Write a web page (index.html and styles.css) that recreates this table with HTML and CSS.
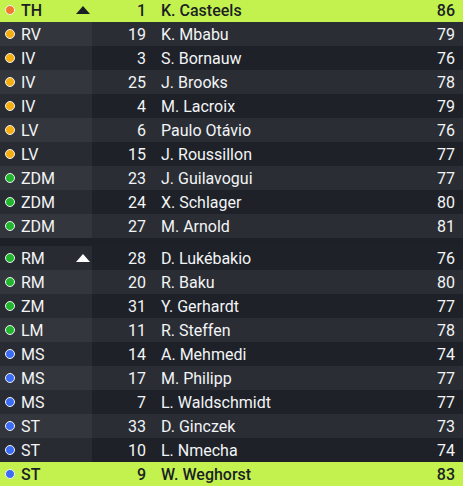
FILE: index.html
```html
<!DOCTYPE html>
<html>
<head>
<meta charset="utf-8">
<link rel="stylesheet" href="styles.css">
</head>
<body>
<div class="list">
  <div class="group">
    <div class="row hl"><div class="pos"><span class="dot th"></span><span class="pt">TH</span><span class="tri dark"></span></div><div class="num">1</div><div class="name">K. Casteels</div><div class="rat">86</div></div>
    <div class="row odd"><div class="pos"><span class="dot df"></span><span class="pt">RV</span></div><div class="num">19</div><div class="name">K. Mbabu</div><div class="rat">79</div></div>
    <div class="row even"><div class="pos"><span class="dot df"></span><span class="pt">IV</span></div><div class="num">3</div><div class="name">S. Bornauw</div><div class="rat">76</div></div>
    <div class="row odd"><div class="pos"><span class="dot df"></span><span class="pt">IV</span></div><div class="num">25</div><div class="name">J. Brooks</div><div class="rat">78</div></div>
    <div class="row even"><div class="pos"><span class="dot df"></span><span class="pt">IV</span></div><div class="num">4</div><div class="name">M. Lacroix</div><div class="rat">79</div></div>
    <div class="row odd"><div class="pos"><span class="dot df"></span><span class="pt">LV</span></div><div class="num">6</div><div class="name">Paulo Otávio</div><div class="rat">76</div></div>
    <div class="row even"><div class="pos"><span class="dot df"></span><span class="pt">LV</span></div><div class="num">15</div><div class="name">J. Roussillon</div><div class="rat">77</div></div>
    <div class="row odd"><div class="pos"><span class="dot mf"></span><span class="pt">ZDM</span></div><div class="num">23</div><div class="name">J. Guilavogui</div><div class="rat">77</div></div>
    <div class="row even"><div class="pos"><span class="dot mf"></span><span class="pt">ZDM</span></div><div class="num">24</div><div class="name">X. Schlager</div><div class="rat">80</div></div>
    <div class="row odd"><div class="pos"><span class="dot mf"></span><span class="pt">ZDM</span></div><div class="num">27</div><div class="name">M. Arnold</div><div class="rat">81</div></div>
  </div>
  <div class="group second">
    <div class="row even"><div class="pos"><span class="dot mf"></span><span class="pt">RM</span><span class="tri light"></span></div><div class="num">28</div><div class="name">D. Lukébakio</div><div class="rat">76</div></div>
    <div class="row odd"><div class="pos"><span class="dot mf"></span><span class="pt">RM</span></div><div class="num">20</div><div class="name">R. Baku</div><div class="rat">80</div></div>
    <div class="row even"><div class="pos"><span class="dot mf"></span><span class="pt">ZM</span></div><div class="num">31</div><div class="name">Y. Gerhardt</div><div class="rat">77</div></div>
    <div class="row odd"><div class="pos"><span class="dot mf"></span><span class="pt">LM</span></div><div class="num">11</div><div class="name">R. Steffen</div><div class="rat">78</div></div>
    <div class="row even"><div class="pos"><span class="dot fw"></span><span class="pt">MS</span></div><div class="num">14</div><div class="name">A. Mehmedi</div><div class="rat">74</div></div>
    <div class="row odd"><div class="pos"><span class="dot fw"></span><span class="pt">MS</span></div><div class="num">17</div><div class="name">M. Philipp</div><div class="rat">77</div></div>
    <div class="row even"><div class="pos"><span class="dot fw"></span><span class="pt">MS</span></div><div class="num">7</div><div class="name">L. Waldschmidt</div><div class="rat">77</div></div>
    <div class="row odd"><div class="pos"><span class="dot fw"></span><span class="pt">ST</span></div><div class="num">33</div><div class="name">D. Ginczek</div><div class="rat">73</div></div>
    <div class="row even"><div class="pos"><span class="dot fw"></span><span class="pt">ST</span></div><div class="num">10</div><div class="name">L. Nmecha</div><div class="rat">74</div></div>
    <div class="row hl"><div class="pos"><span class="dot fw"></span><span class="pt">ST</span></div><div class="num">9</div><div class="name">W. Weghorst</div><div class="rat">83</div></div>
  </div>
</div>
</body>
</html>
```
FILE: styles.css
```css
html, body {
  margin: 0;
  padding: 0;
  background: #1d2026;
  overflow: hidden;
}
body {
  width: 463px;
  height: 486px;
  font-family: Roboto, "Liberation Sans", sans-serif;
  font-size: 16px;
  color: #f2f4f6;
}
.list {
  margin-top: -2px;
  display: flex;
  flex-direction: column;
}
.group {
  display: flex;
  flex-direction: column;
}
.group.second {
  margin-top: 8px;
}
.row {
  height: 24px;
  display: grid;
  grid-template-columns: 92px 54px 1fr auto;
  align-items: center;
}
.row > div {
  height: 100%;
  display: flex;
  align-items: center;
}
.odd { background: #2a2d34; }
.odd .pos { background: #33363d; }
.even { background: #1e2128; }
.even .pos { background: #282b32; }
.hl {
  background: #c3f24f;
  color: #1b1f24;
  font-weight: 500;
}
.pos {
  padding-left: 5px;
  box-sizing: border-box;
}
.dot {
  width: 8px;
  height: 8px;
  border-radius: 50%;
  border: 1px solid #f2f2f2;
  margin-right: 6px;
  flex: none;
}
.dot.th { background: #f27a2a; }
.dot.df { background: #f5ae0f; }
.dot.mf { background: #22b52e; }
.dot.fw { background: #3c6cf4; }
.pt { flex: 1; }
.tri {
  width: 0;
  height: 0;
  border-left: 7px solid transparent;
  border-right: 7px solid transparent;
  margin-right: 2px;
  margin-bottom: 1px;
}
.tri.dark { border-bottom: 8px solid #1b1f24; }
.tri.light { border-bottom: 8px solid #ffffff; }
.num {
  justify-content: flex-end;
}
.name {
  padding-left: 15px;
}
.rat {
  padding-right: 8px;
}
```
